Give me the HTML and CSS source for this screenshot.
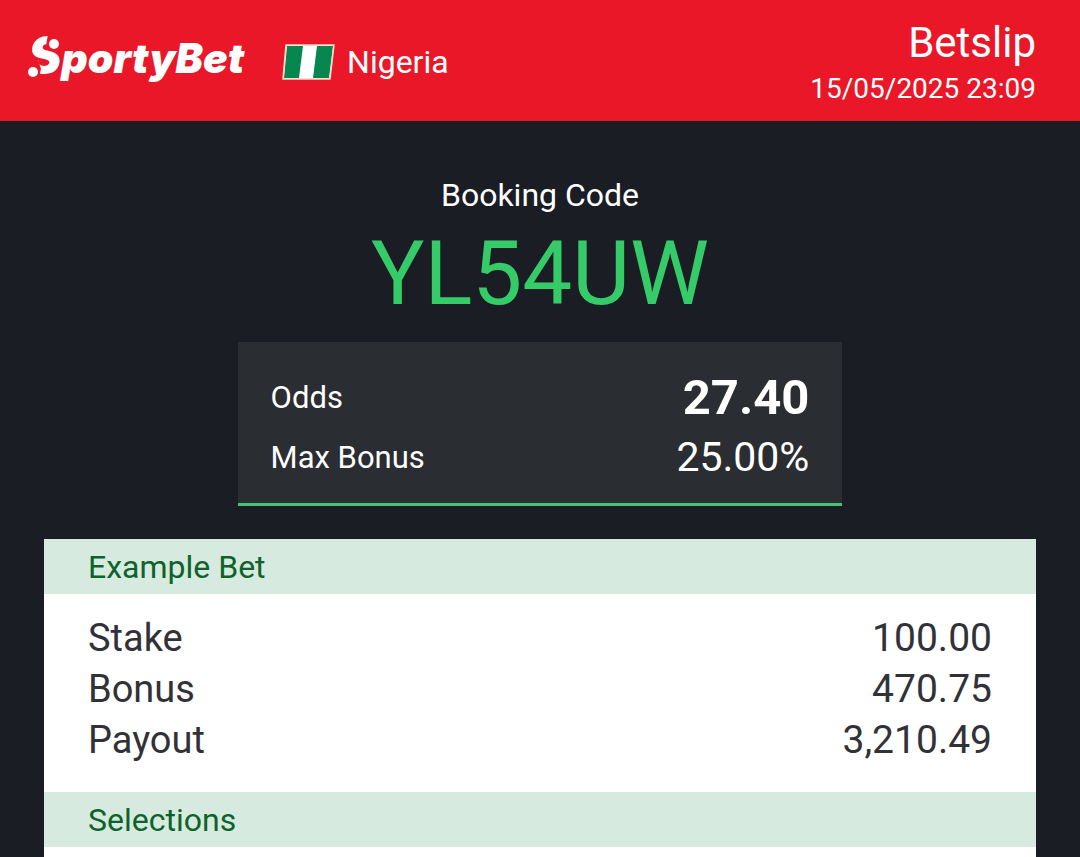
FILE: index.html
```
<!DOCTYPE html>
<html lang="en">
<head>
<meta charset="utf-8">
<meta name="viewport" content="width=device-width, initial-scale=1">
<title>SportyBet Betslip</title>
<link rel="stylesheet" href="styles.css">
</head>
<body>
<header class="topbar">
  <div class="brand">
    <div class="logo"><span class="logo-initial">S</span>portyBet
      <svg class="logo-dots" viewBox="0 0 36 48" aria-hidden="true">
        <path d="M20 0H36V17H24L18 12ZM0 25H10L13 35L10 48H0Z" fill="#e91728"/>
        <circle cx="26" cy="10" r="5" fill="#fff"/>
        <circle cx="5" cy="38" r="5" fill="#fff"/>
      </svg>
    </div>
    <div class="country">
      <svg class="flag" viewBox="0 0 53 36" role="img" aria-label="Nigerian flag">
        <path d="M4 1H52L48 35H1Z" fill="#fff"/>
        <path d="M5 2H21L17 34H2Z" fill="#07864f"/>
        <path d="M35 2H51L47 34H31Z" fill="#07864f"/>
        <path d="M4 1H52L48 35H1Z" fill="none" stroke="#f8d5c4" stroke-width="1.5"/>
      </svg>
      <span>Nigeria</span>
    </div>
  </div>
  <div class="slip-info">
    <h1 class="slip-title">Betslip</h1>
    <time class="slip-date" datetime="2025-05-15T23:09">15/05/2025 23:09</time>
  </div>
</header>
<main>
  <section class="booking">
    <h2 class="booking-label">Booking Code</h2>
    <p class="booking-code">YL54UW</p>
  </section>
  <dl class="summary">
    <div class="summary-row"><dt>Odds</dt><dd class="odds">27.40</dd></div>
    <div class="summary-row"><dt>Max Bonus</dt><dd>25.00%</dd></div>
  </dl>
  <section class="card">
    <h2 class="card-title">Example Bet</h2>
    <dl class="bet">
      <div class="bet-row"><dt>Stake</dt><dd>100.00</dd></div>
      <div class="bet-row"><dt>Bonus</dt><dd>470.75</dd></div>
      <div class="bet-row"><dt>Payout</dt><dd>3,210.49</dd></div>
    </dl>
    <h2 class="card-title">Selections</h2>
  </section>
</main>
</body>
</html>
```
FILE: styles.css
```
* { box-sizing: border-box; margin: 0; }
body {
  min-height: 100vh;
  display: flex;
  flex-direction: column;
  background: #1a1d23;
  color: #fff;
  font-family: Roboto, "Liberation Sans", sans-serif;
  font-size: 32px;
}
h1, h2 { font-weight: 400; }
.topbar {
  display: flex;
  justify-content: space-between;
  padding: 16px 44px 14px 28px;
  background: #e91728;
}
.brand { display: flex; align-items: center; gap: 38px; }
.logo {
  position: relative;
  padding-bottom: 8px;
  font: italic 900 41px/48px Inter, sans-serif;
}
.logo-initial { font-size: 50px; line-height: 40px; }
.logo-dots { position: absolute; left: 0; top: 0; width: 36px; height: 48px; }
.country { display: flex; align-items: center; gap: 12px; }
.flag { width: 53px; height: 38px; }
.slip-info { text-align: right; }
.slip-title { font-size: 42px; line-height: 54px; }
.slip-date { display: block; font-size: 28px; line-height: 37px; }
main { flex: 1; display: flex; flex-direction: column; }
.booking { padding-top: 55px; text-align: center; }
.booking-label { font-size: 32px; line-height: 38px; }
.booking-code { font-size: 89px; line-height: 120px; color: #35cb68; }
.summary {
  width: 56%;
  margin: 8px auto 33px;
  padding: 25px 33px 16px;
  background: #2a2d31;
  border-bottom: 3px solid #42c472;
}
.summary-row { display: flex; justify-content: space-between; align-items: center; height: 60px; }
.summary-row dt { font-size: 31px; }
.summary-row dd { font-size: 41px; }
.summary-row .odds { font-size: 49px; font-weight: 700; }
.card { flex: 1; margin: 0 44px; background: #fff; }
.card-title {
  padding: 0 44px;
  background: #d7eadf;
  color: #0d632b;
  font-size: 32px;
  line-height: 56px;
  height: 55px;
}
.bet { padding: 19px 44px 26px; color: #303237; font-size: 39px; line-height: 51px; }
.bet-row { display: flex; justify-content: space-between; }
.bet dt { font-size: 38px; }
```
